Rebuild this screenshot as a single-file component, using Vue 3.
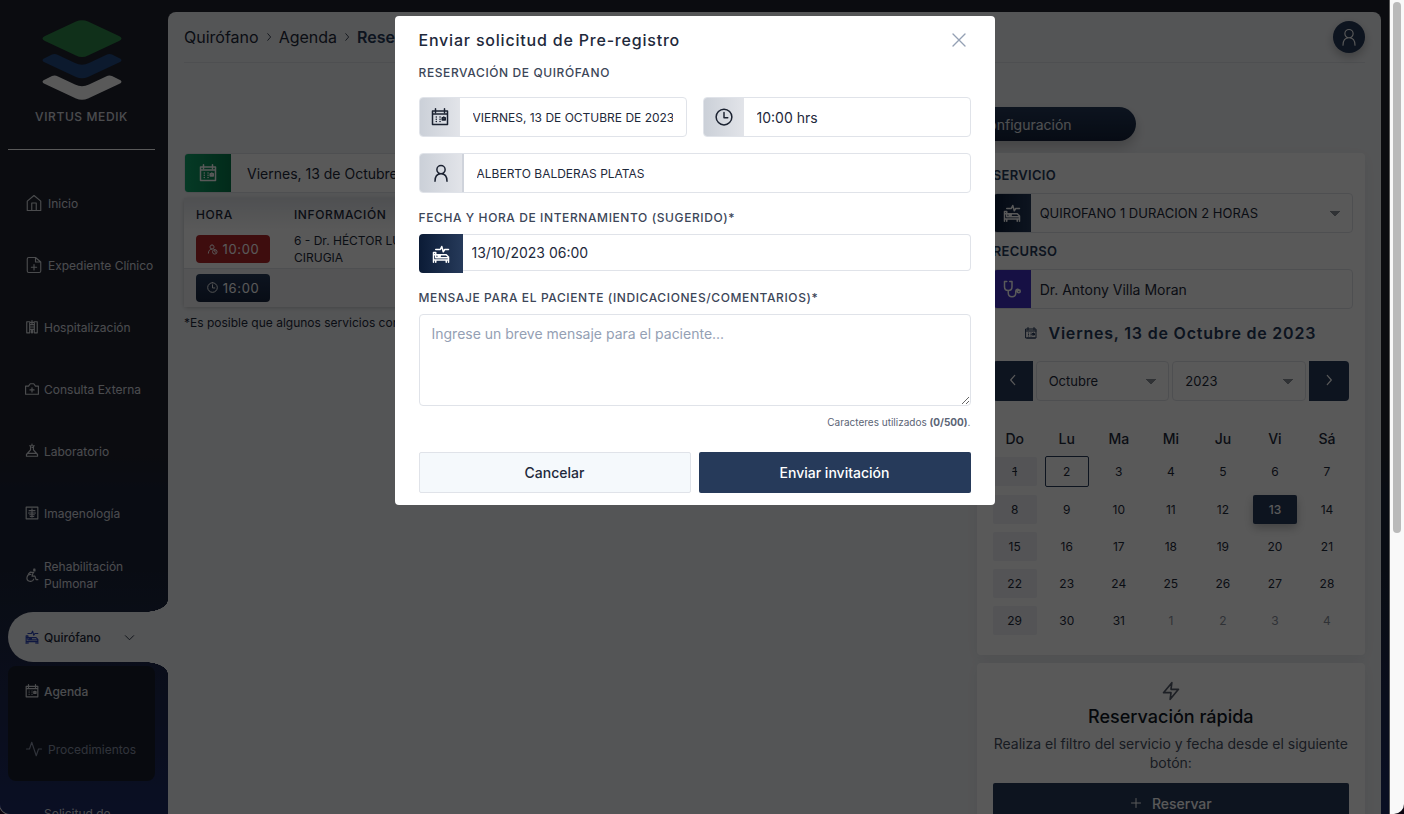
<script setup>

import { ref, computed } from 'vue'

const menu = [
    { label: 'Inicio', icon: 'home', big: true },
    { label: 'Expediente Clínico', icon: 'file', big: true },
    { label: 'Hospitalización', icon: 'hospital' },
    { label: 'Consulta Externa', icon: 'kit' },
    { label: 'Laboratorio', icon: 'flask' },
    { label: 'Imagenología', icon: 'xray' },
    { label: 'Rehabilitación Pulmonar', icon: 'wheel' },
]

const submenu = [
    { label: 'Agenda', icon: 'calendar', active: true },
    { label: 'Procedimientos', icon: 'activity', big: true },
]

// Trazos de los iconos, todos sobre una caja de 24x24
const icons = {
    home: 'M3 9.5 12 2l9 7.500V22H3zM9 22v-10h6v10',
    file: 'M14 2H5a2 2 0 0 0-2 2v16a2 2 0 0 0 2 2h14a2 2 0 0 0 2-2V8zM14 2v6h6M12 11.500v7M8.500 15h7',
    hospital: 'M8 3H3v19h5M16 3h5v19h-5M8 5v17M16 5v17M12 1v7M9 4h6M8 8h8M8 12h8M8 16h8M11 22v-4h2v4',
    kit: 'M1 7h5l3-4h6l3 4h5v14H1zM12 10v7M8.500 13.500h7',
    flask: 'M8 3h8M12 0v1M9.500 3v7l-7 8v3h19v-3l-7-8V3M5 16h14M12 6h2',
    xray: 'M2 2h20v20H2zM12 5v14M7 8h10M6 12h12M8 15h8M9 18h6',
    wheel: 'M15 2h2v3h-2zM15 8l-6-1-3 3M14 8l-2 6h5l2 6h3M10 11a6 6 0 1 0 5 8',
    calendar: 'M2 4h20v18H2zM2 8h20M6 1v5M18 1v5M7 12h.1M12 12h.1M17 12h.1M7 15h.1M12 15h.1M17 15h.1M7 18h.1M12 18h.1M15 13h4v3h-4zM4 22h16',
    activity: 'M22 12h-4l-3 9L9 3l-3 9H2',
    bed: 'M2 10v13M2 10h3v3M2 13h17l3 3v7M2 20h20M5 13v4h17M8 13v2h3v-2M5 20v3M19 20v3M5 6h6l2-4 2 7 2-3h5',
    user: 'M12 2a5.500 5.500 0 1 1 0 11a5.500 5.500 0 0 1 0-11M4 23c0-6 3-10 8-10s8 4 8 10',
    clock: 'M12 1.500a10.500 10.500 0 1 1 0 21a10.500 10.500 0 0 1 0-21M12 6v7h5',
    userClock: 'M11 2a4.500 4.500 0 1 1 0 9a4.500 4.500 0 0 1 0-9M3 20c0-5 3-9 8-9M17 12a5 5 0 1 1 0 10a5 5 0 0 1 0-10M17 14v3l2 1',
    steth: 'M5 2H2v7c0 3 2 5 5 5s5-2 5-5V2H9M7 14v3c0 7 10 7 10 0v-2c0-3 4-4 4-1M21 13a2 2 0 1 1 0 4a2 2 0 0 1 0-4',
    bolt: 'M13 2 3 14h9l-1 8 10-12h-9z',
    plus: 'M12 3v18M3 12h18',
    left: 'M15 4l-7 8 7 8',
    right: 'M9 4l7 8-7 8',
    down: 'M3 8l9 9 9-9',
    close: 'M3 3l18 18M21 3 3 21',
}

const days = ['Do', 'Lu', 'Ma', 'Mi', 'Ju', 'Vi', 'Sá']
const selected = ref(13)

// Octubre 2023 empieza en domingo, las últimas celdas son de noviembre
const weeks = computed(() => {
    const rows = []
    for (let w = 0; w < 5; w++) {
        const row = []
        for (let d = 1; d <= 7; d++) {
            const n = w * 7 + d
            row.push({ id: n, day: n > 31 ? n - 31 : n, other: n > 31, sunday: d == 1 })
        }
        rows.push(row)
    }
    return rows
})

const month = ref('Octubre')
const year = ref('2023')
const service = ref('QUIROFANO 1 DURACION 2 HORAS')
const resource = ref('Dr. Antony Villa Moran')
const bookingDate = ref('Viernes, 13 de Octubre de 2023')

const open = ref(true)
const date = ref('VIERNES, 13 DE OCTUBRE DE 2023')
const hour = ref('10:00 hrs')
const patient = ref('ALBERTO BALDERAS PLATAS')
const admission = ref('13/10/2023 06:00')
const message = ref('')

</script>

<template>
    <div class="screen">
        <div class="window">
            <aside class="sidebar">
                <div class="brand">
                    <svg class="logo" viewBox="0 0 80 80">
                        <path d="M34 1.500Q40-1 46 1.500L77 16Q82 18.500 77 21L46 35.500Q40 38.500 34 35.500L3 21Q-2 18.500 3 16Z" fill="#2f8a4a" />
                        <path d="M3 38L10 34.500Q13 33.500 16 35L33 43Q40 46.500 47 43L64 35Q67 33.500 70 34.500L77 38Q82 40 77 42.500L46 57Q40 59.500 34 57L3 42.500Q-2 40 3 38Z" fill="#234a85" />
                        <path d="M3 59.500L10 56Q13 55 16 56.500L33 64.500Q40 68 47 64.500L64 56.500Q67 55 70 56L77 59.500Q82 61.500 77 64L46 78.500Q40 81 34 78.500L3 64Q-2 61.500 3 59.500Z" fill="#fff" />
                    </svg>
                    <span>VIRTUS MEDIK</span>
                </div>
                <nav class="menu">
                    <a v-for="item of menu" :key="item.label" href="#" class="menuItem">
                        <svg class="icon" :class="{ big: item.big }" viewBox="0 0 24 24"><path :d="icons[item.icon]" /></svg>
                        <span>{{ item.label }}</span>
                    </a>
                    <a href="#" class="menuItem current">
                        <svg class="icon blue" viewBox="0 0 24 24"><path :d="icons.bed" /></svg>
                        <span>Quirófano</span>
                        <svg class="icon chevron" viewBox="0 0 24 24"><path :d="icons.down" /></svg>
                    </a>
                    <div class="submenu">
                        <a v-for="item of submenu" :key="item.label" href="#" class="menuItem" :class="{ active: item.active, dim: !item.active }">
                            <svg class="icon" :class="{ big: item.big }" viewBox="0 0 24 24"><path :d="icons[item.icon]" /></svg>
                            <span>{{ item.label }}</span>
                        </a>
                    </div>
                    <a href="#" class="menuItem noIcon"><span>Solicitud de</span></a>
                </nav>
            </aside>

            <main class="content">
                <header class="topbar">
                    <nav class="crumbs">
                        <a href="#">Quirófano</a>
                        <svg class="icon sep" viewBox="0 0 24 24"><path :d="icons.right" /></svg>
                        <a href="#">Agenda</a>
                        <svg class="icon sep" viewBox="0 0 24 24"><path :d="icons.right" /></svg>
                        <a href="#" class="last">Reservar</a>
                    </nav>
                    <button class="avatar" aria-label="Usuario">
                        <svg class="icon" viewBox="0 0 24 24"><path :d="icons.user" /></svg>
                    </button>
                </header>

                <div class="tabs">
                    <button class="tab">Configuración</button>
                </div>

                <div class="columns">
                    <section class="schedule">
                        <div class="field dateField">
                            <span class="addon green"><svg class="icon" viewBox="0 0 24 24"><path :d="icons.calendar" /></svg></span>
                            <input type="text" aria-label="Fecha" v-model="bookingDate" />
                        </div>
                        <table class="hours">
                            <thead>
                                <tr><th>HORA</th><th>INFORMACIÓN</th></tr>
                            </thead>
                            <tbody>
                                <tr>
                                    <td><button class="slot red"><svg class="icon" viewBox="0 0 24 24"><path :d="icons.userClock" /></svg>10:00</button></td>
                                    <td>6 - Dr. HÉCTOR LUIS<br />CIRUGIA</td>
                                </tr>
                                <tr class="alt">
                                    <td><button class="slot"><svg class="icon" viewBox="0 0 24 24"><path :d="icons.clock" /></svg>16:00</button></td>
                                    <td></td>
                                </tr>
                            </tbody>
                        </table>
                        <p class="note">*Es posible que algunos servicios con</p>
                    </section>

                    <section class="side">
                        <div class="card">
                            <label for="service" class="cardLabel">SERVICIO</label>
                            <div class="field wide">
                                <span class="addon navy"><svg class="icon" viewBox="0 0 24 24"><path :d="icons.bed" /></svg></span>
                                <select id="service" v-model="service"><option>QUIROFANO 1 DURACION 2 HORAS</option></select>
                            </div>
                            <label for="resource" class="cardLabel">RECURSO</label>
                            <div class="field wide">
                                <span class="addon violet"><svg class="icon" viewBox="0 0 24 24"><path :d="icons.steth" /></svg></span>
                                <input id="resource" type="text" v-model="resource" />
                            </div>
                            <h2 class="dateTitle">
                                <svg class="icon" viewBox="0 0 24 24"><path :d="icons.calendar" /></svg>
                                Viernes, 13 de Octubre de 2023
                            </h2>
                            <div class="monthNav">
                                <button aria-label="Anterior"><svg class="icon" viewBox="0 0 24 24"><path :d="icons.left" /></svg></button>
                                <select aria-label="Mes" v-model="month"><option>Octubre</option></select>
                                <select aria-label="Año" v-model="year"><option>2023</option></select>
                                <button class="next" aria-label="Siguiente"><svg class="icon" viewBox="0 0 24 24"><path :d="icons.right" /></svg></button>
                            </div>
                            <table class="calendar">
                                <thead>
                                    <tr><th v-for="d of days" :key="d">{{ d }}</th></tr>
                                </thead>
                                <tbody>
                                    <tr v-for="(week, i) of weeks" :key="i">
                                        <td v-for="c of week" :key="c.id">
                                            <button
                                                :class="{ sunday: c.sunday, struck: c.id == 1, today: c.id == 2, selected: c.id == selected, other: c.other }"
                                                @click="selected = c.id"
                                            >{{ c.day }}</button>
                                        </td>
                                    </tr>
                                </tbody>
                            </table>
                        </div>

                        <div class="card quick">
                            <svg class="icon bolt" viewBox="0 0 24 24"><path :d="icons.bolt" /></svg>
                            <h3>Reservación rápida</h3>
                            <p>Realiza el filtro del servicio y fecha desde el siguiente botón:</p>
                            <button class="reserve"><svg class="icon" viewBox="0 0 24 24"><path :d="icons.plus" /></svg>Reservar</button>
                        </div>
                    </section>
                </div>
            </main>

            <div v-if="open" class="overlay">
                <form class="modal" @submit.prevent="open = false">
                    <div class="modalHead">
                        <h1>Enviar solicitud de Pre-registro</h1>
                        <button type="button" class="close" aria-label="Cerrar" @click="open = false">
                            <svg class="icon" viewBox="0 0 24 24"><path :d="icons.close" /></svg>
                        </button>
                    </div>
                    <label for="date" class="modalLabel">RESERVACIÓN DE QUIRÓFANO</label>
                    <div class="pair">
                        <div class="field">
                            <span class="addon grey"><svg class="icon" viewBox="0 0 24 24"><path :d="icons.calendar" /></svg></span>
                            <input id="date" type="text" class="small" v-model="date" />
                        </div>
                        <div class="field">
                            <span class="addon grey"><svg class="icon" viewBox="0 0 24 24"><path :d="icons.clock" /></svg></span>
                            <input type="text" aria-label="Hora" v-model="hour" />
                        </div>
                    </div>
                    <div class="field patient">
                        <span class="addon grey"><svg class="icon" viewBox="0 0 24 24"><path :d="icons.user" /></svg></span>
                        <input type="text" class="small" aria-label="Paciente" v-model="patient" />
                    </div>
                    <label for="admission" class="modalLabel">FECHA Y HORA DE INTERNAMIENTO (SUGERIDO)*</label>
                    <div class="admission">
                        <span class="addon navy"><svg class="icon" viewBox="0 0 24 24"><path :d="icons.bed" /></svg></span>
                        <input id="admission" type="text" v-model="admission" />
                    </div>
                    <label for="message" class="modalLabel">MENSAJE PARA EL PACIENTE (INDICACIONES/COMENTARIOS)*</label>
                    <textarea id="message" maxlength="500" placeholder="Ingrese un breve mensaje para el paciente..." v-model="message"></textarea>
                    <p class="count">Caracteres utilizados <b>({{ message.length }}/500)</b>.</p>
                    <div class="actions">
                        <button type="button" class="cancel" @click="open = false">Cancelar</button>
                        <button type="submit" class="send">Enviar invitación</button>
                    </div>
                </form>
            </div>
        </div>
        <div class="scrollbar"><div class="thumb"></div></div>
    </div>
</template>

<style>
body {
    background-color: #0b0510;
}
</style>

<style scoped>

* {
    box-sizing: border-box;
}

.screen {
    display: flex;
    height: 100vh;
    overflow: hidden;
    font-family: Inter, "Liberation Sans", sans-serif;
    font-size: 14px;
    color: #1e293b;
}

.window {
    position: relative;
    display: flex;
    flex: 1;
    min-width: 0;
    overflow: hidden;
    background: linear-gradient(#20242f 0, #20242f 56%, #1c2438 60%, #1c2438 70%, #1e2c66 100%);
    border-radius: 0 0 0 10px;
    box-shadow: 0 0 0 1px #555;
}

h1, h2, h3, p {
    margin: 0;
}

a {
    color: inherit;
    text-decoration: none;
}

button, input, select, textarea {
    font-family: inherit;
    font-size: 14px;
    color: inherit;
    margin: 0;
}

.icon {
    width: 14px;
    height: 14px;
    flex: none;
    fill: none;
    stroke: currentColor;
    stroke-width: 2;
    stroke-linecap: round;
    stroke-linejoin: round;
    overflow: visible;
}

.icon.big {
    width: 18px;
    height: 18px;
    stroke-width: 1.5;
}

/* menú lateral */
.sidebar {
    width: 168px;
    flex: none;
    padding: 20px 0 0 8px;
    color: #fff;
}

.brand {
    display: flex;
    flex-direction: column;
    align-items: center;
    height: 130px;
    margin-right: 13px;
    border-bottom: 1px solid #fff;
    font-size: 12px;
    font-weight: 500;
    letter-spacing: 0.05em;
    line-height: 16px;
    color: #d8dbe0;
}

.logo {
    width: 80px;
    height: 80px;
    margin-bottom: 9px;
}

.menu {
    padding-top: 28px;
}

.menuItem {
    position: relative;
    display: flex;
    align-items: center;
    gap: 5px;
    height: 50px;
    margin-bottom: 12px;
    padding-left: 17px;
    font-size: 12px;
    line-height: 17px;
    color: #d8dbe0;
}

.current {
    margin-bottom: 4px;
    background-color: #f1f3f6;
    border-radius: 25px 0 0 25px;
    color: #1e293b;
    font-weight: 500;
}

/* esquinas curvas que unen la opción activa con el contenido */
.current::before,
.current::after {
    content: "";
    position: absolute;
    right: 0;
    width: 24px;
    height: 12px;
}

.current::before {
    bottom: 100%;
    background: radial-gradient(ellipse 24px 12px at 0 0, transparent 98%, #f1f3f6 100%);
}

.current::after {
    top: 100%;
    background: radial-gradient(ellipse 24px 12px at 0 100%, transparent 98%, #f1f3f6 100%);
}

.blue {
    color: #2b44b8;
}

.chevron {
    width: 11px;
    height: 11px;
    margin-left: 18px;
}

.submenu {
    height: 115px;
    margin: 0 13px 16px 0;
    background-color: #181f2c;
    border-radius: 8px;
}

.submenu .menuItem {
    margin-bottom: 8px;
}

.active {
    font-weight: 500;
}

.dim {
    color: #8b93a8;
}

.noIcon {
    align-items: flex-start;
    padding: 8px 0 0 36px;
}

/* contenido */
.content {
    flex: 1;
    min-width: 0;
    margin: 12px 8px 0 0;
    padding: 0 16px;
    background-color: #f1f3f6;
    border-radius: 8px 8px 0 0;
}

.topbar {
    display: flex;
    align-items: center;
    justify-content: space-between;
    height: 51px;
    border-bottom: 1px solid #dfe3e8;
}

.crumbs {
    display: flex;
    align-items: center;
    gap: 5px;
    font-size: 16px;
}

.sep {
    width: 10px;
    height: 10px;
}

.last {
    font-weight: 600;
    color: #263a5a;
}

.avatar {
    display: flex;
    align-items: center;
    justify-content: center;
    width: 32px;
    height: 32px;
    padding: 0;
    border: none;
    border-radius: 50%;
    background-color: #263a5a;
    color: #fff;
    box-shadow: 0 4px 10px rgba(0, 0, 0, 0.25);
}

.avatar .icon {
    width: 18px;
    height: 18px;
    stroke-width: 1.5;
}

.tabs {
    display: flex;
    justify-content: flex-end;
    margin-top: 44px;
    padding-right: 19.4%;
}

.tab {
    width: 222px;
    height: 34px;
    border: none;
    border-radius: 17px;
    background: linear-gradient(#263a5a, #14213a);
    color: #e2e5ea;
    box-shadow: 0 6px 12px rgba(0, 0, 0, 0.2);
}

.columns {
    display: grid;
    grid-template-columns: 2fr 1fr;
    gap: 16px;
    margin-top: 12px;
}

.schedule {
    min-width: 0;
}

.field {
    display: flex;
    height: 40px;
    border: 1px solid #e0e3e9;
    border-radius: 4px;
    background-color: #fff;
    overflow: hidden;
}

.field input,
.field select {
    flex: 1;
    min-width: 0;
    border: none;
    outline: none;
    background-color: transparent;
    padding: 0 13px;
}

.addon {
    display: flex;
    align-items: center;
    justify-content: center;
    width: 40px;
    flex: none;
    color: #fff;
}

.addon .icon {
    width: 18px;
    height: 18px;
}

.green {
    width: 46px;
    background: linear-gradient(90deg, #10a56b, #067a4b);
}

.navy {
    background: linear-gradient(90deg, #0b1b36, #263a5a);
}

.violet {
    background-color: #3f2fc4;
}

.grey {
    background: linear-gradient(90deg, #cbd0d8, #e2e4e9);
    color: #1b2231;
}

.dateField input {
    padding-left: 16px;
}

.hours {
    width: 100%;
    margin-top: 5px;
    border-collapse: collapse;
    background-color: #fff;
    border-radius: 4px;
    box-shadow: 0 1px 4px rgba(0, 0, 0, 0.2);
    font-size: 12px;
    line-height: 17px;
}

.hours thead {
    background: linear-gradient(#e2e5ea, #fff);
}

.hours th {
    height: 32px;
    padding: 0 12px;
    text-align: left;
    font-weight: 500;
    letter-spacing: 0.05em;
}

.hours td {
    padding: 2px 12px;
    height: 38px;
}

.hours th:first-child,
.hours td:first-child {
    width: 91px;
}

.alt {
    background-color: #eff1f4;
    border-top: 1px solid #dfe3e8;
}

.slot {
    display: flex;
    align-items: center;
    justify-content: center;
    gap: 5px;
    width: 74px;
    height: 28px;
    border: none;
    border-radius: 4px;
    padding: 0;
    background: linear-gradient(#263a5a, #18253f);
    color: #fff;
    font-size: 13px;
    letter-spacing: 0.05em;
}

.slot .icon {
    width: 11px;
    height: 11px;
}

.red {
    background: #b3262a;
}

.note {
    margin-top: 8px;
    font-size: 12px;
    line-height: 16px;
}

/* columna derecha */
.card {
    padding: 14px 16px 16px;
    background-color: #fff;
    border-radius: 4px;
    box-shadow: 0 3px 16px rgba(0, 0, 0, 0.06);
}

.cardLabel {
    display: block;
    margin-bottom: 10px;
    font-size: 13px;
    font-weight: 600;
    line-height: 16px;
    letter-spacing: 0.025em;
    color: #263a5a;
}

.wide {
    margin: 0 -4px 10px 0;
}

.wide .addon {
    width: 37px;
}

.wide input,
.wide select {
    padding: 0 9px;
}

select {
    appearance: none;
    font-size: 13px;
    background: linear-gradient(#777, #777) no-repeat;
    background-size: 0;
}

.wide select,
.monthNav select {
    background-image: conic-gradient(from -45deg at 50% 100%, #8a8f98 90deg, transparent 0);
    background-repeat: no-repeat;
    background-size: 10px 5px;
    background-position: right 12px center;
}

.dateTitle {
    display: flex;
    align-items: center;
    justify-content: center;
    gap: 11px;
    font-size: 16px;
    font-weight: 600;
    line-height: 28px;
    letter-spacing: 0.05em;
    color: #263a5a;
}

.dateTitle .icon {
    width: 12px;
    height: 12px;
}

.monthNav {
    display: grid;
    grid-template-columns: 40px 1fr 1fr 40px;
    gap: 3px;
    margin-top: 14px;
}

.monthNav button {
    height: 40px;
    border: none;
    background-color: #263a5a;
    color: #fff;
    border-radius: 4px 0 0 4px;
}

.monthNav .next {
    border-radius: 0 4px 4px 0;
}

.monthNav select {
    padding: 0 12px;
    border: 1px solid #e0e3e9;
    border-radius: 4px;
}

.calendar {
    width: calc(100% + 8px);
    margin: 24px -4px 0;
    border-collapse: collapse;
    table-layout: fixed;
    text-align: center;
}

.calendar th {
    height: 27px;
    padding: 0;
    font-weight: 500;
}

.calendar td {
    padding: 4px;
}

.calendar button {
    display: block;
    width: 100%;
    height: 29px;
    padding: 0;
    border: none;
    border-radius: 2px;
    background-color: transparent;
    font-size: 12px;
}

.calendar .sunday {
    background-color: #eff1f5;
}

.calendar .struck {
    text-decoration: line-through;
}

.calendar .today {
    height: 31px;
    border: 1px solid #263a5a;
}

.calendar .selected {
    background-color: #263a5a;
    color: #fff;
    font-weight: 500;
    box-shadow: 0 4px 10px rgba(0, 0, 0, 0.25);
}

.calendar .other {
    color: #8a909c;
}

.quick {
    display: flex;
    flex-direction: column;
    align-items: center;
    margin-top: 8px;
    padding-top: 18px;
    text-align: center;
}

.bolt {
    width: 20px;
    height: 20px;
    color: #555c6b;
}

.quick h3 {
    margin-top: 4px;
    font-size: 18px;
    font-weight: 500;
    line-height: 24px;
    color: #0f1724;
}

.quick p {
    margin: 5px 0 11px;
    line-height: 19px;
    color: #475063;
}

.reserve {
    display: flex;
    align-items: center;
    justify-content: center;
    gap: 10px;
    width: 100%;
    height: 40px;
    border: none;
    border-radius: 2px;
    background-color: #263a5a;
    color: #fff;
    font-weight: 500;
}

.reserve .icon {
    width: 12px;
    height: 12px;
}

/* ventana modal */
.overlay {
    position: absolute;
    inset: 0;
    display: flex;
    justify-content: center;
    align-items: flex-start;
    padding-top: 16px;
    background-color: rgba(0, 0, 0, 0.65);
}

.modal {
    width: 600px;
    padding: 12px 24px;
    background-color: #fff;
    border-radius: 4px;
}

.modalHead {
    display: flex;
    align-items: center;
    justify-content: space-between;
    height: 24px;
}

h1 {
    font-size: 16px;
    font-weight: 500;
    letter-spacing: 0.05em;
}

.close {
    display: flex;
    padding: 4px;
    border: none;
    background: none;
    color: #94a0b4;
}

.close .icon {
    width: 16px;
    height: 16px;
}

.modalLabel {
    display: block;
    margin-top: 16px;
    font-size: 12px;
    font-weight: 500;
    line-height: 17px;
    letter-spacing: 0.05em;
    color: #3c4658;
}

.modalHead + .modalLabel {
    margin-top: 12px;
}

.pair {
    display: grid;
    grid-template-columns: 1fr 1fr;
    gap: 16px;
    margin: 16px 0;
}

.field .small {
    font-size: 12px;
}

.patient .addon {
    width: 44px;
    border-right: 2px solid #cfd3db;
}

.admission {
    display: flex;
    align-items: flex-start;
    margin-top: 8px;
}

.admission .addon {
    width: 44px;
    height: 39px;
    border-radius: 4px 0 0 4px;
}

.admission input {
    flex: 1;
    min-width: 0;
    height: 37px;
    padding: 0 9px;
    border: 1px solid #e0e3e9;
    border-left: none;
    border-radius: 0 4px 4px 0;
}

textarea {
    display: block;
    width: 100%;
    height: 92px;
    margin-top: 8px;
    padding: 9px 12px;
    border: 1px solid #e0e3e9;
    border-radius: 4px;
    line-height: 20px;
    resize: vertical;
}

textarea::placeholder {
    color: #94a0b4;
}

.count {
    margin-top: 8px;
    font-size: 10px;
    line-height: 16px;
    text-align: right;
    color: #5b6475;
}

.actions {
    display: grid;
    grid-template-columns: 1fr 1fr;
    gap: 8px;
    margin-top: 22px;
}

.actions button {
    height: 41px;
    border-radius: 2px;
    font-weight: 500;
}

.cancel {
    border: 1px solid #e0e3e9;
    background-color: #f5f9fc;
}

.send {
    border: none;
    background-color: #263a5a;
    color: #fff;
}

/* barra de desplazamiento */
.scrollbar {
    width: 15px;
    flex: none;
    padding: 2px 3px 0 4px;
    background-color: #f9f9f9;
    border-radius: 0 0 10px 0;
}

.thumb {
    height: 531px;
    border-radius: 4px;
    background-color: #bababa;
}

</style>
